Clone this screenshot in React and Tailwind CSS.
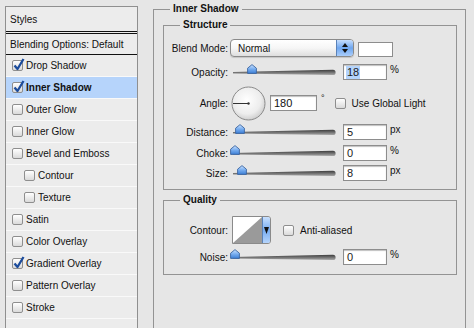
import React from "react";

function Check({ checked }) {
  return (
    <span className="relative inline-block w-[11px] h-[11px] shrink-0 rounded-[2px] border border-[#8e8e8e] bg-linear-to-b from-white to-[#dadada]">
      {checked && (
        <svg className="absolute left-[0px] top-[-3px]" width="12" height="13" viewBox="0 0 12 13">
          <path d="M1.5 7.5 L4.5 11 L10.5 1" stroke="#1c4c9c" strokeWidth="2.3" fill="none" strokeLinejoin="round" />
        </svg>
      )}
    </span>
  );
}

const items = [
  { label: "Drop Shadow", checked: true },
  { label: "Inner Shadow", checked: true, selected: true },
  { label: "Outer Glow" },
  { label: "Inner Glow" },
  { label: "Bevel and Emboss" },
  { label: "Contour", indent: true },
  { label: "Texture", indent: true },
  { label: "Satin" },
  { label: "Color Overlay" },
  { label: "Gradient Overlay", checked: true },
  { label: "Pattern Overlay" },
  { label: "Stroke" },
  { label: "" },
];

function Track() {
  return (
    <svg className="absolute left-0 top-[5px]" width="104" height="7" viewBox="0 0 104 7">
      <defs>
        <linearGradient id="trk" x1="0" y1="0" x2="0" y2="1">
          <stop offset="0" stopColor="#3c3c3c" />
          <stop offset="1" stopColor="#a8a8a8" />
        </linearGradient>
      </defs>
      <path d="M0 3 L100 0.8 A2.6 2.6 0 0 1 100 6 L0 4.4 Z" fill="url(#trk)" />
    </svg>
  );
}

function Thumb({ left }) {
  return (
    <svg className="absolute top-[0px]" style={{ left }} width="10" height="10" viewBox="0 0 10 10">
      <defs>
        <linearGradient id="thm" x1="0" y1="0" x2="0" y2="1">
          <stop offset="0" stopColor="#cfe4ff" />
          <stop offset="0.5" stopColor="#78aef0" />
          <stop offset="1" stopColor="#3d7fd6" />
        </linearGradient>
      </defs>
      <path d="M5 0.6 L9.4 4.2 L9.4 9.4 L0.6 9.4 L0.6 4.2 Z" fill="url(#thm)" stroke="#3a64a0" strokeWidth="0.9" />
    </svg>
  );
}

function NumBox({ value, selected }) {
  return (
    <div className="w-[44px] h-[16px] border border-[#8d8d8d] bg-white shadow-[inset_0_1px_1px_rgba(0,0,0,0.25)] flex items-center pl-[3px] text-[11px] leading-[13px] text-[#1a1a1a]">
      {selected ? <span className="bg-[#b4d4fc] px-[1px] -ml-[1px]">{value}</span> : <span>{value}</span>}
    </div>
  );
}

function SliderRow({ label, thumb, value, unit, selected }) {
  return (
    <div className="flex items-center h-[16px]">
      <div className="w-[64px] text-right">{label}</div>
      <div className="relative w-[104px] h-[16px] ml-[5px]">
        <Track />
        <Thumb left={thumb} />
      </div>
      <div className="ml-[6px]">
        <NumBox value={value} selected={selected} />
      </div>
      <div className="ml-[3px] text-[10px] self-start leading-[12px]">{unit}</div>
    </div>
  );
}

export default function App() {
  return (
    <div className="w-[474px] h-[328px] overflow-hidden bg-[#e6e6e6] flex items-start font-['Liberation_Sans',Arial,sans-serif] text-[10px] text-[#111]">
      {/* Left styles list */}
      <div className="ml-[5px] mt-[6px] w-[133px] h-[340px] border border-[#8f8f8f] bg-[#ececec] flex flex-col shrink-0">
        <div className="h-[24px] flex items-center pl-[4px]">Styles</div>
        <div className="h-[3px] border-y border-[#111]"></div>
        <div className="h-[21px] flex items-center pl-[4px] border-b border-[#111]">Blending Options: Default</div>
        {items.map((it, i) => (
          <div
            key={i}
            className={`h-[22px] flex items-center gap-[3px] border-b border-[#f9f9f9] ${it.indent ? "pl-[18px]" : "pl-[6px]"} ${it.selected ? "bg-[#b6d4fb] font-bold" : ""}`}
          >
            {it.label && <Check checked={it.checked} />}
            <span>{it.label}</span>
          </div>
        ))}
      </div>

      {/* Right panel */}
      <fieldset className="ml-[15px] mt-[3px] w-[313px] min-h-[340px] border border-[#939393] shrink-0">
        <legend className="ml-[16px] px-[3px] font-bold text-[10px] leading-[12px]">Inner Shadow</legend>

        <fieldset className="ml-[9px] mt-[4px] w-[294px] border border-[#939393] pb-[8px]">
          <legend className="ml-[16px] px-[3px] font-bold leading-[12px]">Structure</legend>

          {/* Blend mode */}
          <div className="flex items-center mt-[8px] h-[18px]">
            <div className="w-[64px] text-right">Blend Mode:</div>
            <div className="ml-[2px] w-[124px] h-[18px] rounded-[4px] border border-[#8a8a8a] bg-linear-to-b from-white via-[#f6f6f6] to-[#dedede] flex items-center overflow-hidden shadow-[0_1px_1px_rgba(0,0,0,0.15)]">
              <span className="flex-1 pl-[7px]">Normal</span>
              <div className="w-[17px] h-full bg-linear-to-b from-[#c6defd] via-[#6ea6ef] to-[#a9cdfb] border-l border-[#5a82b8] flex flex-col items-center justify-center gap-[2px]">
                <svg width="6" height="4" viewBox="0 0 6 4"><path d="M3 0 L6 4 L0 4 Z" fill="#111" /></svg>
                <svg width="6" height="4" viewBox="0 0 6 4"><path d="M0 0 L6 0 L3 4 Z" fill="#111" /></svg>
              </div>
            </div>
            <div className="ml-[4px] w-[35px] h-[15px] mt-[3px] border border-[#8d8d8d] bg-white"></div>
          </div>

          {/* Opacity */}
          <div className="mt-[7px]">
            <SliderRow label="Opacity:" thumb={14} value="18" unit="%" selected />
          </div>

          {/* Angle */}
          <div className="flex items-center mt-[6px] h-[34px]">
            <div className="w-[64px] text-right">Angle:</div>
            <svg className="ml-[3px]" width="35" height="35" viewBox="0 0 35 35">
              <defs>
                <radialGradient id="dial" cx="0.45" cy="0.4" r="0.6">
                  <stop offset="0" stopColor="#ffffff" />
                  <stop offset="0.7" stopColor="#ededed" />
                  <stop offset="1" stopColor="#cfcfcf" />
                </radialGradient>
              </defs>
              <circle cx="17.5" cy="17.5" r="16.5" fill="url(#dial)" stroke="#8a8a8a" strokeWidth="1" />
              <line x1="17.5" y1="17.5" x2="2" y2="17.5" stroke="#333" strokeWidth="1" />
              <circle cx="17.5" cy="17.5" r="1.2" fill="#333" />
            </svg>
            <div className="ml-[4px] w-[47px] h-[16px] border border-[#8d8d8d] bg-white shadow-[inset_0_1px_1px_rgba(0,0,0,0.25)] flex items-center pl-[3px] text-[11px]">180</div>
            <span className="ml-[4px] self-start mt-[6px] text-[9px]">°</span>
            <div className="ml-[10px] flex items-center gap-[6px]">
              <Check />
              <span>Use Global Light</span>
            </div>
          </div>

          {/* Distance / Choke / Size */}
          <div className="mt-[4px]">
            <SliderRow label="Distance:" thumb={2} value="5" unit="px" />
          </div>
          <div className="mt-[5px]">
            <SliderRow label="Choke:" thumb={-3} value="0" unit="%" />
          </div>
          <div className="mt-[4px]">
            <SliderRow label="Size:" thumb={4} value="8" unit="px" />
          </div>
        </fieldset>

        <fieldset className="ml-[9px] mt-[4px] w-[294px] border border-[#939393] pb-[9px]">
          <legend className="ml-[16px] px-[3px] font-bold leading-[12px]">Quality</legend>

          {/* Contour */}
          <div className="flex items-center mt-[10px] h-[28px]">
            <div className="w-[64px] text-right">Contour:</div>
            <div className="ml-[4px] h-[28px] flex border border-[#8a8a8a] rounded-r-[3px] overflow-hidden">
              <svg width="29" height="26" viewBox="0 0 29 26" className="block">
                <rect width="29" height="26" fill="#ffffff" />
                <path d="M0 26 L29 0 L29 26 Z" fill="#9a9a9a" />
              </svg>
              <div className="w-[8px] h-full bg-linear-to-b from-[#c9e0fd] via-[#77acf0] to-[#b5d4fb] border-l border-[#5a82b8] flex items-center justify-center">
                <svg width="5" height="7" viewBox="0 0 5 7"><path d="M0 0 L5 0 L2.5 7 Z" fill="#111" /></svg>
              </div>
            </div>
            <div className="ml-[12px] flex items-center gap-[6px]">
              <Check />
              <span>Anti-aliased</span>
            </div>
          </div>

          {/* Noise */}
          <div className="mt-[5px]">
            <SliderRow label="Noise:" thumb={-3} value="0" unit="%" />
          </div>
        </fieldset>
      </fieldset>
    </div>
  );
}
